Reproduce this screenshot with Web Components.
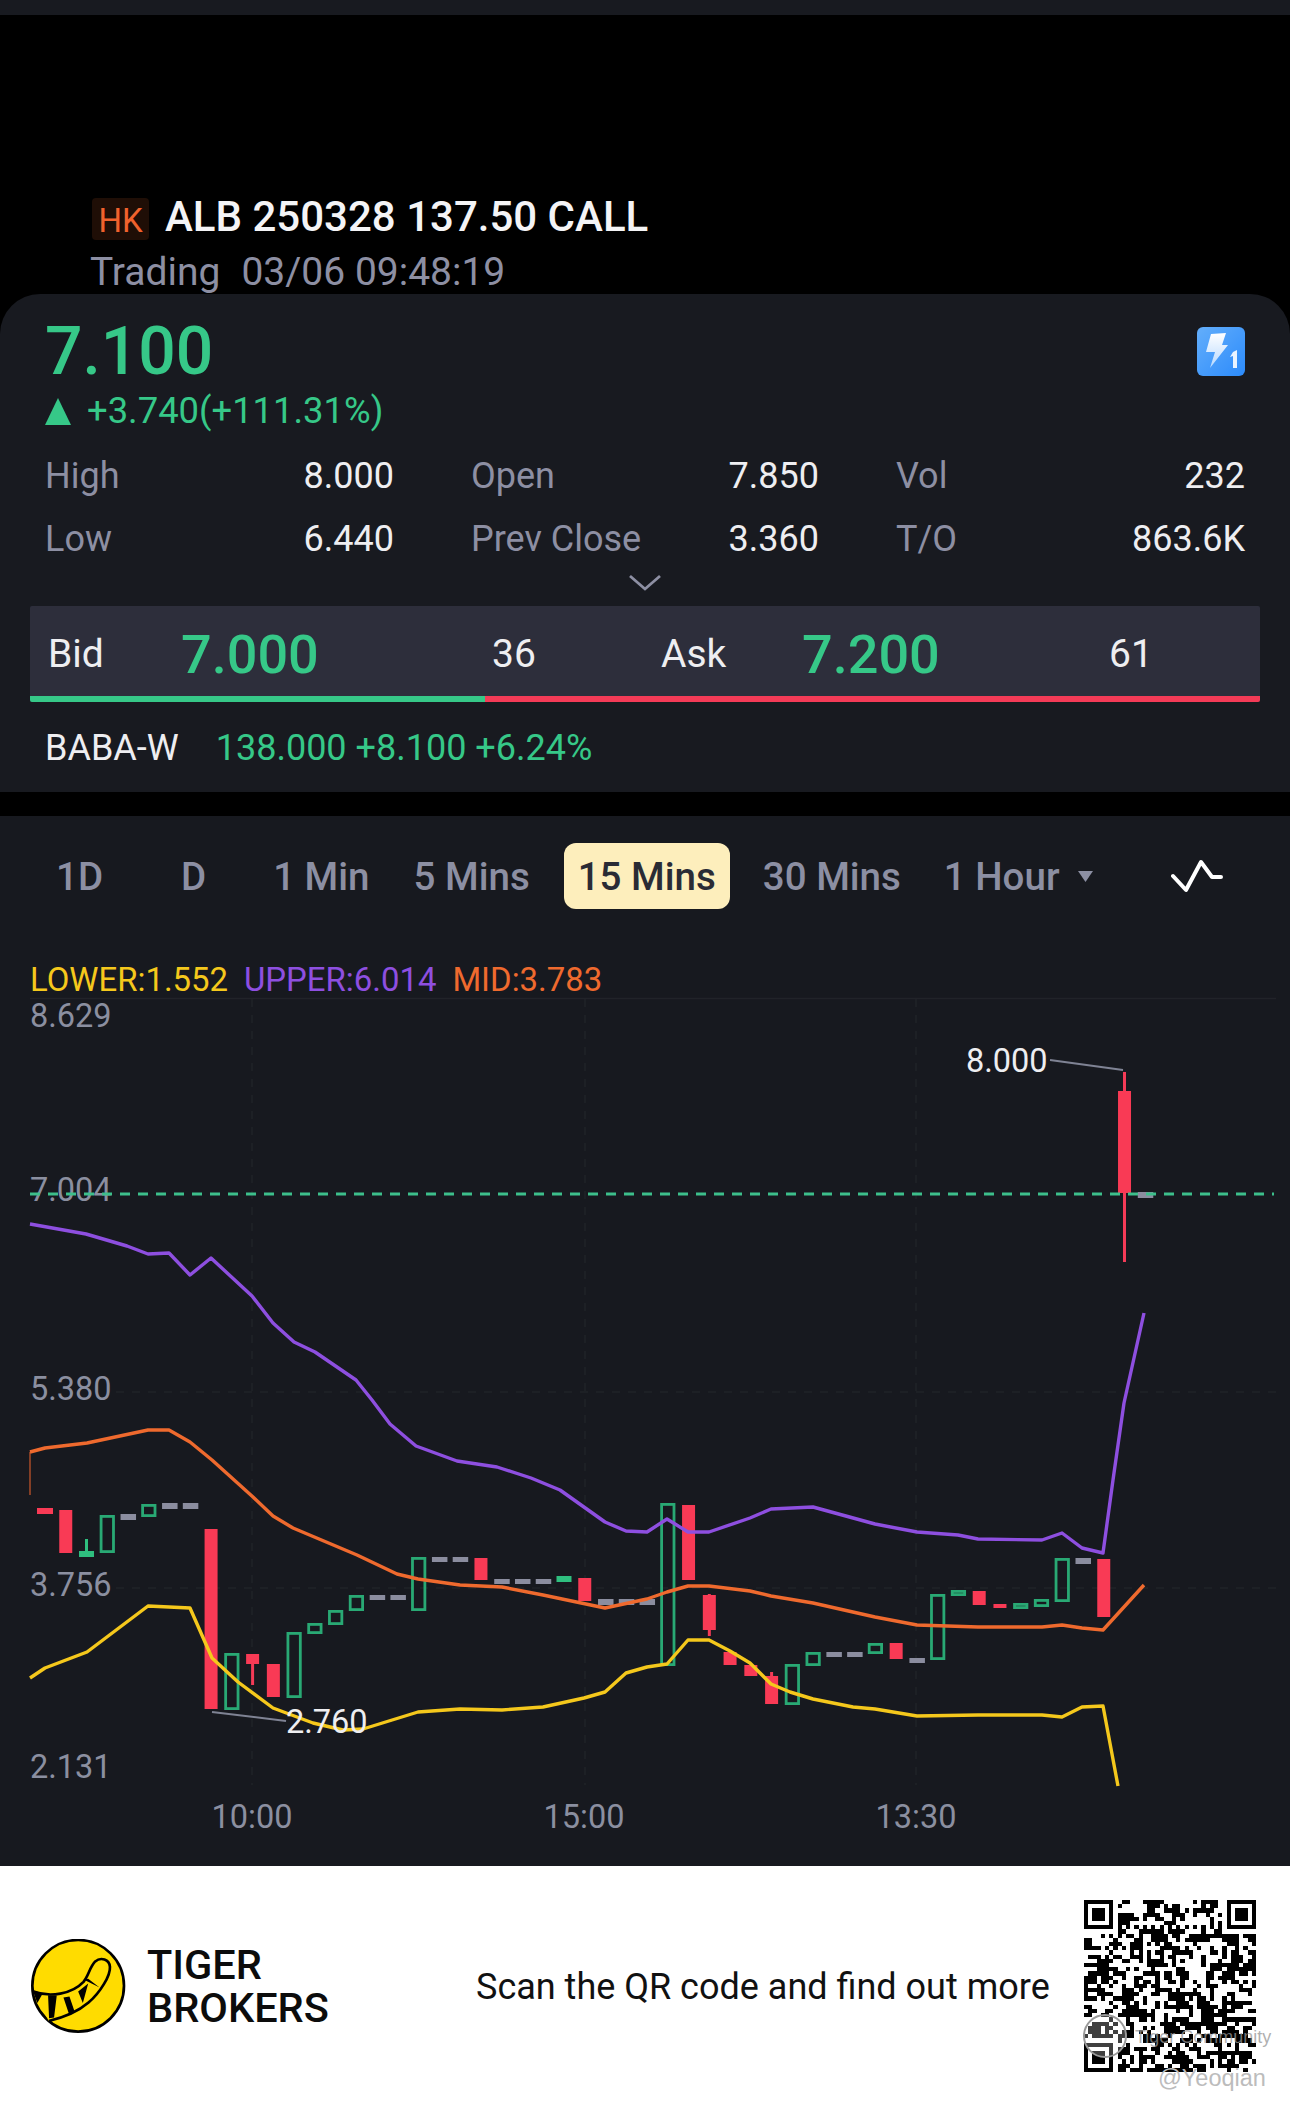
<!DOCTYPE html>
<html>
<head>
<meta charset="utf-8">
<title>ALB 250328 137.50 CALL</title>
<style>
  html,body{margin:0;padding:0;background:#000;}
  body{width:1290px;font-family:Roboto,"Liberation Sans",sans-serif;}
</style>
</head>
<body>
<tb-statusbar></tb-statusbar>
<tb-header market="HK" status="Trading" time="03/06 09:48:19">ALB 250328 137.50 CALL</tb-header>
<tb-quote>
  <tb-stat slot="stats" label="High" value="8.000"></tb-stat>
  <tb-stat slot="stats" label="Open" value="7.850"></tb-stat>
  <tb-stat slot="stats" label="Vol" value="232"></tb-stat>
  <tb-stat slot="stats" label="Low" value="6.440"></tb-stat>
  <tb-stat slot="stats" label="Prev Close" value="3.360"></tb-stat>
  <tb-stat slot="stats" label="T/O" value="863.6K"></tb-stat>
</tb-quote>
<tb-chart-panel>
  <tb-tab>1D</tb-tab>
  <tb-tab>D</tb-tab>
  <tb-tab>1 Min</tb-tab>
  <tb-tab>5 Mins</tb-tab>
  <tb-tab active>15 Mins</tb-tab>
  <tb-tab>30 Mins</tb-tab>
  <tb-tab caret>1 Hour</tb-tab>
</tb-chart-panel>
<tb-footer></tb-footer>

<script>
class TbStatusbar extends HTMLElement{
    constructor(){
        super();
        this.attachShadow({mode:'open'});
        this.shadowRoot.innerHTML = `<style>:host{display:block;height:15px;background:#181a20;}</style>`;
    }
}
customElements.define('tb-statusbar',TbStatusbar);

class TbHeader extends HTMLElement{
    constructor(){
        super();
        this.attachShadow({mode:'open'});
        this.shadowRoot.innerHTML = `
        <style>
            :host{display:block;height:279px;background:#000;box-sizing:border-box;padding:183px 0 0 90px;font-family:Roboto,sans-serif;overflow:visible;}
            #title{display:flex;align-items:center;height:42px;}
            #market{width:57px;height:42px;margin-left:2px;background:#1f0e06;color:#f0622d;font-size:33px;line-height:45px;text-align:center;border-radius:4px;}
            #name{margin:-5px 0 0 16px;color:#f4f4f6;font-size:42px;font-weight:500;line-height:38px;white-space:nowrap;}
            #sub{display:flex;margin-top:10px;color:#8d8fa3;font-size:39px;line-height:44px;white-space:nowrap;}
            #time{margin-left:21px;}
        </style>
        <div id="title"><span id="market"></span><span id="name"><slot></slot></span></div>
        <div id="sub"><span id="status"></span><span id="time"></span></div>`;
        this.shadowRoot.querySelector('#market').textContent = this.getAttribute('market');
        this.shadowRoot.querySelector('#status').textContent = this.getAttribute('status');
        this.shadowRoot.querySelector('#time').textContent = this.getAttribute('time');
    }
}
customElements.define('tb-header',TbHeader);

class TbStat extends HTMLElement{
    constructor(){
        super();
        this.attachShadow({mode:'open'});
        this.shadowRoot.innerHTML = `
        <style>
            :host{display:flex;justify-content:space-between;height:63px;line-height:63px;font-size:36px;white-space:nowrap;}
            #l{color:#8d8fa3;}
            #v{color:#eeeef1;}
        </style>
        <span id="l"></span><span id="v"></span>`;
        this.shadowRoot.querySelector('#l').textContent = this.getAttribute('label');
        this.shadowRoot.querySelector('#v').textContent = this.getAttribute('value');
    }
}
customElements.define('tb-stat',TbStat);

class TbQuote extends HTMLElement{
    constructor(){
        super();
        this.attachShadow({mode:'open'});
        this.shadowRoot.innerHTML = `
        <style>
            :host{display:block;height:498px;background:#181a20;border-radius:40px 40px 0 0;position:relative;font-family:Roboto,sans-serif;}
            #price-row{display:flex;justify-content:space-between;padding:25px 45px 0;height:60px;}
            #price{color:#36c888;font-size:66px;font-weight:500;line-height:66px;}
            #flash{width:48px;height:49px;margin:8px 0 0;}
            #change-row{display:flex;align-items:center;gap:16px;padding:0 45px;margin-top:12px;height:40px;color:#36c888;font-size:36.4px;line-height:40px;}
            #stats{display:grid;grid-template-columns:349px 348px 349px;column-gap:77px;margin:0 0 0 45px;padding-top:13.5px;width:1200px;}
            #chev{display:block;margin:3px auto 0;height:17px;}
            #book{margin:15px 30px 0;height:96px;background:#2d2e3b;position:relative;border-radius:2px;color:#eeeef1;font-size:39px;}
            #book .cell{display:grid;grid-template-columns:151px 311px 169px 141px 307px 1fr;align-items:center;height:90px;box-sizing:border-box;padding-top:7px;}
            #book span{white-space:nowrap;}
            #book .px{color:#36c888;font-size:54px;font-weight:500;}
            #book .lab{margin-left:18px;}
            #bar{display:flex;height:6px;border-radius:0 0 2px 2px;overflow:hidden;}
            #bar i{display:block;}
            #bar .g{width:455px;background:#36c888;}
            #bar .r{flex:1;background:#f43b57;}
            #under{display:flex;gap:37px;padding:25px 45px 0;font-size:36px;line-height:42px;white-space:nowrap;color:#eeeef1;}
            #under .g{color:#36c888;}
        </style>
        <div id="price-row">
            <span id="price">7.100</span>
            <svg id="flash" viewBox="0 0 48 49">
                <defs><linearGradient id="fg" x1="0" y1="0" x2="1" y2="1"><stop offset="0" stop-color="#63aefb"/><stop offset="1" stop-color="#2c8bfb"/></linearGradient>
                <linearGradient id="bg" x1="0" y1="0" x2="0" y2="1"><stop offset="0" stop-color="#fff"/><stop offset="1" stop-color="#b5d8ff"/></linearGradient></defs>
                <rect width="48" height="49" rx="6" fill="url(#fg)"/>
                <path d="M14 7 L29 6 L25 18 L31 18 L13 41 L18 25 L9 25 Z" fill="url(#bg)"/>
                <path d="M36 25 L40 23 L40 41 L36 41 L36 29 L33 30 Z" fill="#eaf4ff"/>
            </svg>
        </div>
        <div id="change-row">
            <svg width="26" height="27" viewBox="0 0 26 27"><path d="M13 0 L26 27 L0 27 Z" fill="#36c888"/></svg>
            <span>+3.740(+111.31%)</span>
        </div>
        <div id="stats"><slot name="stats"></slot></div>
        <svg id="chev" width="34" height="17" viewBox="0 0 34 17"><path d="M2 2 L17 15 L32 2" fill="none" stroke="#8d8fa3" stroke-width="2.8"/></svg>
        <div id="book">
            <div class="cell">
                <span class="lab">Bid</span><span class="px">7.000</span><span>36</span>
                <span>Ask</span><span class="px">7.200</span><span>61</span>
            </div>
            <div id="bar"><i class="g"></i><i class="r"></i></div>
        </div>
        <div id="under"><span>BABA-W</span><span class="g">138.000 +8.100 +6.24%</span></div>`;
    }
}
customElements.define('tb-quote',TbQuote);

class TbTab extends HTMLElement{
    constructor(){
        super();
        this.attachShadow({mode:'open'});
        this.shadowRoot.innerHTML = `
        <style>
            :host{display:flex;align-items:center;justify-content:center;height:66px;font-size:38.5px;font-weight:500;color:#8c8fa3;white-space:nowrap;}
            :host([active]){background:#fdeebc;color:#2a2b35;border-radius:12px;padding:0 14px;}
            svg{margin-left:18px;display:none;}
            :host([caret]) svg{display:block;}
        </style>
        <slot></slot><svg width="15" height="11" viewBox="0 0 15 11"><path d="M0 0 H15 L7.5 11 Z" fill="#8c8fa3"/></svg>`;
    }
}
customElements.define('tb-tab',TbTab);

class TbKline extends HTMLElement{
    constructor(){
        super();
        this.attachShadow({mode:'open'});
        const candles = [
            ['R',1508,1514],['r',1510,1553],['s',1551,1557,1539,1557],['g',1515,1553],['n',1514,1520],['g',1504,1517],['n',1503,1509],['n',1503,1509],
            ['r',1529,1709],['g',1653,1710],['r',1654,1664,1654,1685],['r',1664,1697],['g',1632,1698],['g',1623,1634],['g',1610,1625],['g',1595,1611],
            ['n',1595,1600],['n',1595,1600],['g',1557,1611],['n',1557,1562],['n',1557,1562],['r',1558,1580],['n',1579,1584],['n',1579,1584],['n',1579,1584],
            ['s',1576,1582],['r',1578,1601],['n',1599,1605],['n',1599,1605],['n',1599,1605],['g',1503,1666],['r',1505,1580],['r',1595,1630,1594,1636],
            ['r',1652,1665],['r',1665,1676],['r',1676,1704,1672,1704],['g',1664,1705],['g',1652,1666],['n',1652,1657],['n',1652,1657],['g',1643,1654],
            ['r',1643,1659],['n',1658,1663],['g',1594,1660],['g',1590,1596],['r',1591,1605],['r',1604,1608],['g',1603,1609],['g',1599,1607],['g',1558,1602],
            ['n',1558,1564],['r',1559,1617],['r',1091,1193,1072,1262],['n',1192,1198]
        ];
        let bars = '';
        candles.forEach((c,i)=>{
            const cx = 45 + i*20.76;
            const t = c[0], y0 = c[1], y1 = c[2];
            if(c.length > 3){
                bars += `<line x1="${cx}" x2="${cx}" y1="${c[3]}" y2="${c[4]}" stroke="${t==='s'?'#2fbf7f':'#f43b57'}" stroke-width="3"/>`;
            }
            if(t==='r') bars += `<rect x="${cx-6.5}" y="${y0}" width="13" height="${y1-y0}" fill="#f93a55"/>`;
            if(t==='R') bars += `<rect x="${cx-8}" y="${y0}" width="16" height="${y1-y0}" fill="#f93a55"/>`;
            if(t==='s') bars += `<rect x="${cx-7.5}" y="${y0}" width="15" height="${y1-y0}" fill="#2fbf7f"/>`;
            if(t==='n') bars += `<rect x="${cx-7.5}" y="${y0}" width="15.5" height="${y1-y0}" fill="#8b8d9f"/>`;
            if(t==='g') bars += `<rect x="${cx-6.2}" y="${y0+1.4}" width="12.4" height="${y1-y0-2.8}" fill="none" stroke="#29a974" stroke-width="2.8"/>`;
        });
        const upper = '30,1224 86,1234 127,1246 148,1254 169,1253 190,1275 211,1258 252,1296 273,1323 294,1342 315,1352 356,1380 372,1400 390,1424 416,1446 457,1461 497,1467 531,1478 560,1490 605,1522 626,1531 647,1532 667,1519 688,1532 709,1532 750,1518 771,1509 813,1507 875,1524 917,1532 958,1535 978,1539 1042,1540 1062,1533 1082,1548 1103,1553 1113,1480 1124,1403 1144,1313';
        const mid = '30,1452 45,1448 87,1443 148,1430 169,1430 190,1442 212,1460 253,1497 273,1516 293,1528 357,1555 397,1574 418,1579 460,1585 502,1587 543,1595 605,1608 647,1599 667,1592 688,1586 709,1586 750,1591 771,1596 813,1603 875,1617 917,1625 978,1627 1042,1627 1062,1625 1082,1628 1103,1630 1144,1585';
        const lower = '30,1678 45,1668 87,1652 148,1606 190,1608 212,1658 238,1682 273,1708 313,1723 343,1730 363,1729 418,1712 460,1709 502,1710 543,1707 584,1698 605,1692 626,1673 647,1667 667,1664 688,1640 709,1640 730,1651 750,1663 771,1684 790,1692 813,1699 853,1707 875,1709 917,1716 978,1715 1042,1715 1062,1717 1082,1707 1103,1706 1118,1786';
        this.shadowRoot.innerHTML = `
        <style>
            :host{display:block;height:882px;margin-top:0;}
            svg{display:block;}
            text{font-family:Roboto,sans-serif;font-size:32.5px;}
            .axis{fill:#8b8fa0;}
            .hi{fill:#eeeef1;}
            .grid{stroke:#212329;stroke-width:1.5;stroke-dasharray:8 8;}
            polyline{fill:none;stroke-width:3.4;stroke-linejoin:round;}
        </style>
        <svg width="1290" height="882" viewBox="0 984 1290 882">
            <line x1="30" x2="1276" y1="998.5" y2="998.5" stroke="#212329" stroke-width="1.5"/>
            <line class="grid" x1="116" x2="1276" y1="1392" y2="1392"/>
            <line class="grid" x1="116" x2="1276" y1="1588" y2="1588"/>
            <line class="grid" x1="252" x2="252" y1="999" y2="1785"/>
            <line class="grid" x1="585" x2="585" y1="999" y2="1785"/>
            <line class="grid" x1="916" x2="916" y1="999" y2="1785"/>
            <text class="axis" x="30" y="1027">8.629</text>
            <text class="axis" x="30" y="1201">7.004</text>
            <text class="axis" x="30" y="1400">5.380</text>
            <text class="axis" x="30" y="1596">3.756</text>
            <text class="axis" x="30" y="1778">2.131</text>
            <text class="axis" x="252" y="1828" text-anchor="middle">10:00</text>
            <text class="axis" x="584" y="1828" text-anchor="middle">15:00</text>
            <text class="axis" x="916" y="1828" text-anchor="middle">13:30</text>
            ${bars}
            <line x1="30" x2="30" y1="1452" y2="1495" stroke="#f0642d" stroke-width="1"/>
            <polyline points="${upper}" stroke="#8e4fe0"/>
            <polyline points="${mid}" stroke="#ef6a2e"/>
            <polyline points="${lower}" stroke="#f5c81c"/>
            <line x1="30" x2="1274" y1="1194" y2="1194" stroke="#3dbf8b" stroke-width="3" stroke-dasharray="10 8"/>
            <line x1="1050" y1="1060" x2="1123" y2="1070" stroke="#7f8394" stroke-width="2"/>
            <text class="hi" x="966" y="1072">8.000</text>
            <line x1="212" y1="1712" x2="286" y2="1721" stroke="#7f8394" stroke-width="2"/>
            <text class="hi" x="286" y="1733">2.760</text>
        </svg>`;
    }
}
customElements.define('tb-kline',TbKline);

class TbChartPanel extends HTMLElement{
    constructor(){
        super();
        this.attachShadow({mode:'open'});
        this.shadowRoot.innerHTML = `
        <style>
            :host{display:block;margin-top:24px;height:1050px;background:#17191f;font-family:Roboto,sans-serif;}
            #tabs{display:flex;align-items:center;height:66px;padding:27px 0 0 0;position:relative;}
            ::slotted(tb-tab:nth-child(1)){margin-left:56px;}
            ::slotted(tb-tab:nth-child(2)){margin-left:78px;}
            ::slotted(tb-tab:nth-child(3)){margin-left:67px;}
            ::slotted(tb-tab:nth-child(4)){margin-left:44px;}
            ::slotted(tb-tab:nth-child(5)){margin-left:34px;}
            ::slotted(tb-tab:nth-child(6)){margin-left:33px;}
            ::slotted(tb-tab:nth-child(7)){margin-left:43px;}
            #pulse{margin-left:78px;}
            #legend{display:flex;gap:16px;padding:49px 0 0 30px;height:26px;line-height:44px;font-size:32.9px;white-space:nowrap;}
            .l{color:#f5c81c;}.u{color:#8e4fe0;}.m{color:#ef6a2e;}
        </style>
        <div id="tabs"><slot></slot>
            <svg id="pulse" width="52" height="34" viewBox="0 0 52 34"><path d="M2 17 L15 31 L30 3 L41 18 H50" fill="none" stroke="#fff" stroke-width="4" stroke-linecap="round" stroke-linejoin="round"/></svg>
        </div>
        <div id="legend"><span class="l">LOWER:1.552</span><span class="u">UPPER:6.014</span><span class="m">MID:3.783</span></div>
        <tb-kline></tb-kline>`;
    }
}
customElements.define('tb-chart-panel',TbChartPanel);

class TbQr extends HTMLElement{
    constructor(){
        super();
        this.attachShadow({mode:'open'});
        const n = 41;
        const m = [];
        let seed = 20250306;
        const rnd = ()=>{ seed = (seed*1664525 + 1013904223) >>> 0; return seed/4294967296; };
        for(let y=0;y<n;y++){
            m.push([]);
            for(let x=0;x<n;x++){
                const prev = x>0 ? m[y][x-1] : 0;
                const up = y>0 ? m[y-1][x] : 0;
                m[y].push(rnd() < 0.38 + 0.14*prev + 0.12*up ? 1 : 0);
            }
        }
        const square = (ox,oy,size)=>{
            for(let y=0;y<size;y++){
                for(let x=0;x<size;x++){
                    const d = Math.min(x,y,size-1-x,size-1-y);
                    m[oy+y][ox+x] = d!==1 ? 1 : 0;
                }
            }
        };
        const clear = (ox,oy,w,h)=>{
            for(let y=oy;y<oy+h;y++) for(let x=ox;x<ox+w;x++) m[y][x] = 0;
        };
        clear(0,0,8,8); clear(n-8,0,8,8); clear(0,n-8,8,8);
        square(0,0,7); square(n-7,0,7); square(0,n-7,7); square(n-9,n-9,5);
        for(let i=8;i<n-8;i++){ m[6][i] = i%2===0?1:0; m[i][6] = i%2===0?1:0; }
        let d = '';
        m.forEach((row,y)=>row.forEach((v,x)=>{ if(v) d += `M${x} ${y}h1v1h-1z`; }));
        this.shadowRoot.innerHTML = `
        <style>
            :host{display:block;width:172px;height:172px;position:relative;}
            svg{display:block;}
            #wm{position:absolute;left:51px;top:124px;color:rgba(150,150,150,.75);font-size:18px;line-height:26px;white-space:nowrap;font-family:"Liberation Sans",sans-serif;}
            #user{position:absolute;left:74px;top:162px;color:#bcbcbc;font-size:23.5px;line-height:32px;white-space:nowrap;font-family:"Liberation Sans",sans-serif;}
            #ring{position:absolute;left:-3px;top:112px;}
        </style>
        <svg width="172" height="172" viewBox="0 0 ${n} ${n}" shape-rendering="crispEdges"><path d="${d}" fill="#000"/></svg>
        <svg id="ring" width="48" height="48" viewBox="0 0 48 48"><circle cx="24" cy="24" r="21" fill="rgba(255,255,255,.25)" stroke="#999" stroke-width="2"/></svg>
        <span id="wm">Tiger Community</span>
        <span id="user">@Yeoqian</span>`;
    }
}
customElements.define('tb-qr',TbQr);

class TbFooter extends HTMLElement{
    constructor(){
        super();
        this.attachShadow({mode:'open'});
        this.shadowRoot.innerHTML = `
        <style>
            :host{display:flex;align-items:flex-start;height:240px;background:#fff;color:#0c0c0c;font-family:Roboto,sans-serif;position:relative;}
            #logo{margin:73px 0 0 31px;flex:none;}
            #brand{margin:77px 0 0 21px;font-size:41.5px;font-weight:500;line-height:43px;width:198px;}
            #scan{margin:100px 0 0 131px;width:574px;flex:none;font-size:36px;line-height:42px;white-space:nowrap;color:#111;}
            tb-qr{margin:34px 0 0 34px;flex:none;}
        </style>
        <svg id="logo" width="95" height="95" viewBox="93 237 284 284">
            <circle cx="234" cy="377" r="137" fill="#ffdc00" stroke="#000" stroke-width="8"/>
            <path d="M100 394 C150 412 215 402 250 365 C266 345 268 322 285 304 C302 290 327 298 329 320 C331 346 300 397 265 427 C230 457 190 472 146 482" fill="#ffdc00" stroke="#000" stroke-width="8" stroke-linejoin="round"/>
            <path d="M98 390 L128 400 L112 428 Z M144 405 L170 406 L162 472 L147 474 Z M190 412 L208 409 L224 456 L207 463 Z M234 394 L264 370 L248 428 Z M250 358 L264 356 L298 382 Z" fill="#000"/>
        </svg>
        <div id="brand">TIGER BROKERS</div>
        <div id="scan">Scan the QR code and find out more</div>
        <tb-qr></tb-qr>`;
    }
}
customElements.define('tb-footer',TbFooter);
</script>
</body>
</html>
